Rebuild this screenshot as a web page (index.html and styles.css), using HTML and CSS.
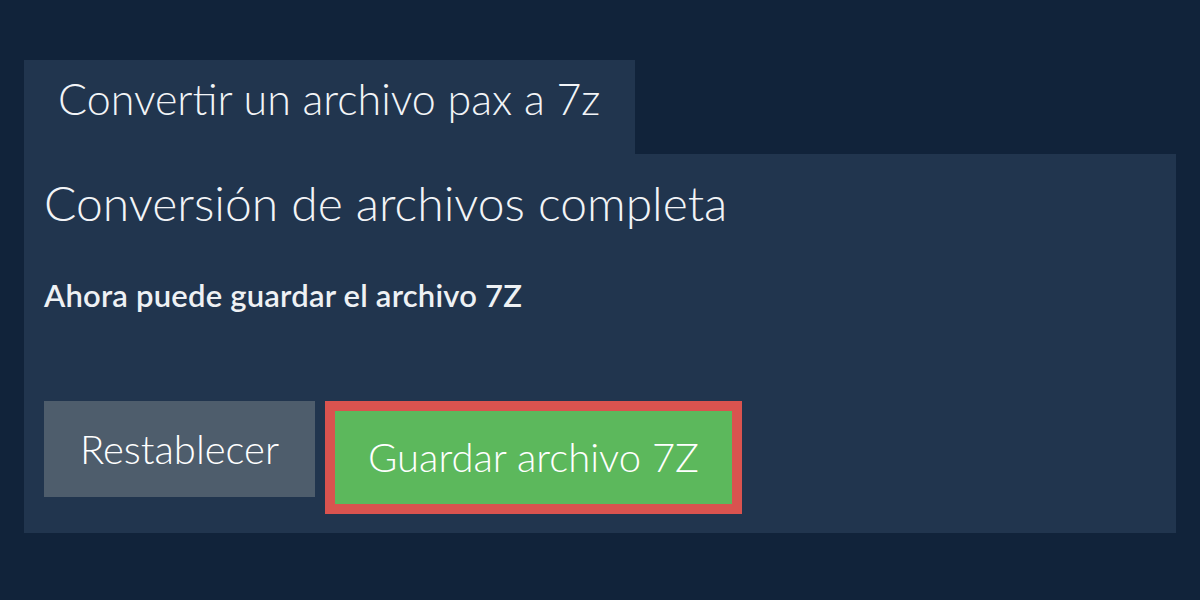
FILE: index.html
```html
<!DOCTYPE html>
<html lang="es">
<head>
<meta charset="utf-8">
<title>Convertir pax a 7z</title>
<link rel="stylesheet" href="styles.css">
</head>
<body>
<div class="page">
  <div class="tabs">
    <div class="tab">Convertir un archivo pax a 7z</div>
  </div>
  <section class="panel">
    <h1 class="title">Conversión de archivos completa</h1>
    <p class="note">Ahora puede guardar el archivo 7Z</p>
    <div class="actions">
      <button class="btn btn-reset" type="button">Restablecer</button>
      <div class="save-frame">
        <button class="btn btn-save" type="button">Guardar archivo 7Z</button>
      </div>
    </div>
  </section>
</div>
</body>
</html>
```
FILE: styles.css
```css
html, body {
  margin: 0;
  padding: 0;
}

body {
  background: #11233a;
  color: #ffffff;
  font-family: Lato, "Open Sans", sans-serif;
  width: 1200px;
  height: 600px;
  overflow: hidden;
}

.page {
  padding: 60px 24px 0 24px;
}

.tabs {
  display: flex;
}

.tab {
  background: #21354e;
  box-sizing: border-box;
  height: 94px;
  padding: 13px 35px 0 34px;
  font-size: 43px;
  font-weight: 300;
  line-height: 1.2;
  color: #f2f4f7;
}

.panel {
  background: #21354e;
  padding: 20px 20px 19px 20px;
}

.title {
  margin: 0;
  font-size: 48px;
  font-weight: 300;
  line-height: 1.2;
  color: #f2f4f7;
}

.note {
  margin: 45px 0 0 0;
  font-size: 31px;
  font-weight: 600;
  letter-spacing: 0.2px;
  line-height: 1.2;
  color: #eef1f4;
}

.actions {
  margin-top: 87px;
  display: flex;
  align-items: flex-start;
  gap: 10px;
}

.btn {
  border: 0;
  margin: 0;
  font-family: Lato, "Open Sans", sans-serif;
  font-weight: 300;
  font-size: 40px;
  color: #ffffff;
  cursor: pointer;
}

.btn-reset {
  background: #4e5d6c;
  width: 271px;
  height: 96px;
  padding: 0;
}

.save-frame {
  border: 10px solid #d9534f;
  display: flex;
}

.btn-save {
  background: #5cb85c;
  width: 397px;
  height: 93px;
  padding: 0;
}
```
